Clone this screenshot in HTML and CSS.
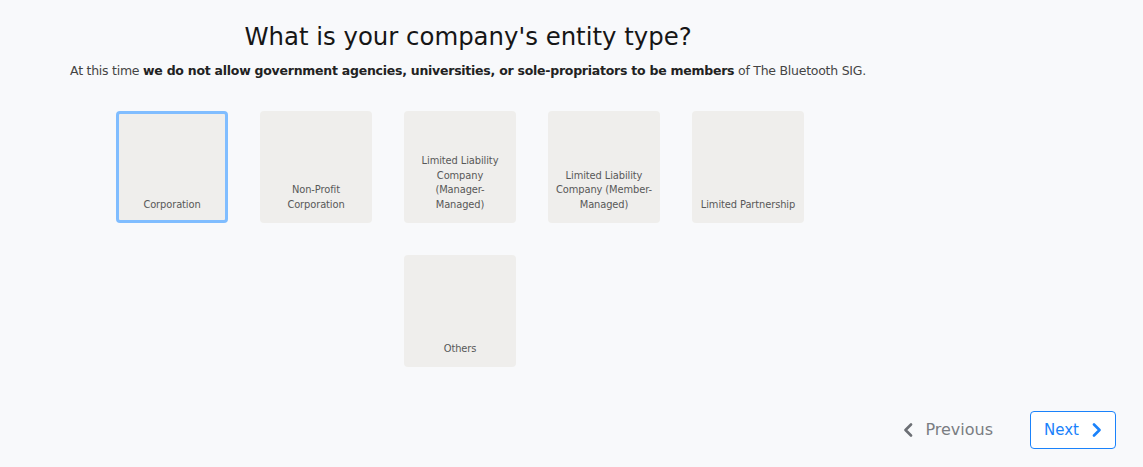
FILE: index.html
```html
<!DOCTYPE html>
<html>
<head>
<meta charset="utf-8">
<link rel="stylesheet" href="styles.css">
</head>
<body>
<div class="page">
  <div class="content">
    <h1 class="title">What is your company's entity type?</h1>
    <p class="subtitle">At this time <b>we do not allow government agencies, universities, or sole-propriators to be members</b> of The Bluetooth SIG.</p>
    <div class="cards">
      <div class="card selected"><span>Corporation</span></div>
      <div class="card"><span>Non-Profit<br>Corporation</span></div>
      <div class="card"><span>Limited Liability<br>Company<br>(Manager-<br>Managed)</span></div>
      <div class="card"><span>Limited Liability<br>Company (Member-<br>Managed)</span></div>
      <div class="card"><span>Limited Partnership</span></div>
      <div class="card"><span>Others</span></div>
    </div>
  </div>
  <div class="nav">
    <button class="btn prev">
      <svg width="10" height="14" viewBox="0 0 10 14"><path d="M8 1.5 L2.5 7 L8 12.5" fill="none" stroke="#6c6f74" stroke-width="2.6" stroke-linecap="round" stroke-linejoin="round"/></svg>
      <span>Previous</span>
    </button>
    <button class="btn next">
      <span>Next</span>
      <svg width="10" height="14" viewBox="0 0 10 14"><path d="M2 1.5 L7.5 7 L2 12.5" fill="none" stroke="#1a82fb" stroke-width="2.6" stroke-linecap="round" stroke-linejoin="round"/></svg>
    </button>
  </div>
</div>
</body>
</html>
```
FILE: styles.css
```css
html, body {
  margin: 0;
  padding: 0;
  background: #f8f9fb;
  font-family: "DejaVu Sans", "Noto Sans", sans-serif;
}
.page {
  width: 1143px;
  height: 467px;
  position: relative;
  overflow: hidden;
}
.content {
  width: 936px;
  padding-top: 22px;
}
.title {
  margin: 0;
  text-align: center;
  font-size: 24.4px;
  font-weight: 500;
  color: #161616;
  line-height: 30px;
}
.subtitle {
  margin: 10px 0 0 0;
  text-align: center;
  font-size: 12.5px;
  color: #444;
  line-height: 18px;
  letter-spacing: -0.25px;
}
.subtitle b {
  color: #222;
  font-weight: 700;
}
.cards {
  width: 688px;
  margin: 31px 0 0 116px;
  display: flex;
  flex-wrap: wrap;
  justify-content: center;
  column-gap: 32px;
  row-gap: 32px;
}
.card {
  width: 112px;
  height: 112px;
  box-sizing: border-box;
  background: #efeeec;
  border-radius: 4px;
  display: flex;
  align-items: flex-end;
  justify-content: center;
  text-align: center;
  padding: 0 3px 11px;
  font-size: 9.9px;
  line-height: 14.5px;
  color: #585858;
  letter-spacing: -0.1px;
}
.card.selected {
  border: 3px solid #80bdff;
  padding-bottom: 8px;
}
.nav {
  position: absolute;
  right: 27px;
  top: 410px;
  display: flex;
  align-items: center;
  gap: 36px;
}
.btn {
  font-family: inherit;
  font-size: 15px;
  background: none;
  border: 1px solid transparent;
  border-radius: 4px;
  height: 38px;
  display: flex;
  align-items: center;
  gap: 12px;
  padding: 0 13px;
  cursor: pointer;
}
.prev {
  color: #7a7d82;
  padding: 0;
  font-size: 16px;
}
.next {
  color: #1a82fb;
  border-color: #1a82fb;
  background: #fff;
  width: 86px;
  justify-content: space-between;
  margin-top: 1px;
}
```
